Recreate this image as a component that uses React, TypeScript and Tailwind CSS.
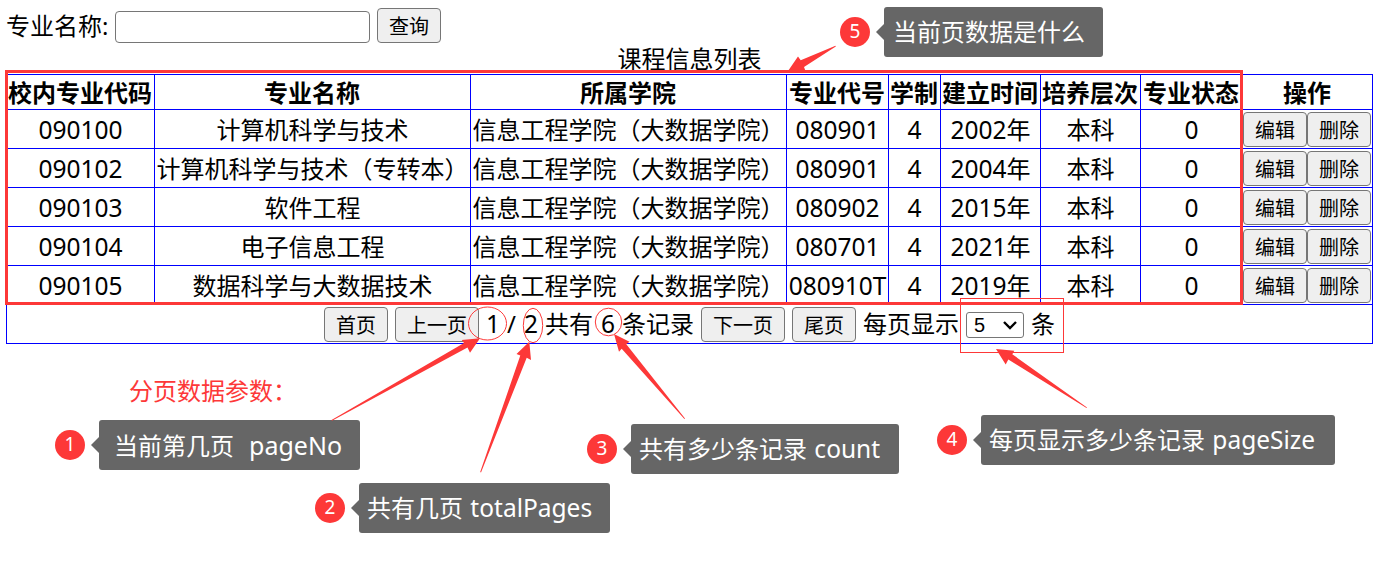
import type { ReactNode } from "react";

const majors = [
  ["090100", "计算机科学与技术", "080901", "2002"],
  ["090102", "计算机科学与技术（专转本）", "080901", "2004"],
  ["090103", "软件工程", "080902", "2015"],
  ["090104", "电子信息工程", "080701", "2021"],
  ["090105", "数据科学与大数据技术", "080910T", "2019"],
];

const headers = ["校内专业代码", "专业名称", "所属学院", "专业代号", "学制", "建立时间", "培养层次", "专业状态", "操作"];

const columns = ["w-[148px]", "w-[316px]", "w-[316px]", "w-[102px]", "w-[52px]", "w-[100px]", "w-[100px]", "w-[102px]", "w-[130px]"];

function Button({ children, wide = false }: { children: ReactNode; wide?: boolean }) {
  return (
    <button
      className={`h-[35px] shrink-0 rounded-[4px] border border-[#767676] bg-[#efefef] pt-[2px] text-center text-[20px] leading-[31px] ${wide ? "w-[84px]" : "w-[64px]"}`}
    >
      {children}
    </button>
  );
}

function Cell({ children }: { children: ReactNode }) {
  return (
    <td className="h-[39px] border-r border-b border-[#0000ff] p-0 pt-[2px] text-center leading-[32px] whitespace-nowrap">
      {children}
    </td>
  );
}

function Num({ children }: { children: ReactNode }) {
  return <span className="text-[24.5px]">{children}</span>;
}

function Callout({ n, place, box, children }: { n: number; place: string; box: string; children: ReactNode }) {
  return (
    <div className={`absolute flex h-[50px] items-center ${place}`}>
      <span className="h-[30px] w-[30px] rounded-full bg-[#fd3838] text-center text-[19px] leading-[29px] text-white">{n}</span>
      <svg className="ml-[6px] h-4 w-2" viewBox="0 0 8 16">
        <path d="M8 0 0 8l8 8z" fill="#666" />
      </svg>
      <span className={`h-[50px] rounded-[3px] bg-[#666] leading-[50px] whitespace-pre text-white ${box}`}>{children}</span>
    </div>
  );
}

export default function App() {
  return (
    <div className="relative h-[576px] w-[1391px] overflow-hidden bg-white font-['Noto_Sans','Noto_Sans_CJK_SC',sans-serif] text-[24px] text-black">
      <div className="flex h-[43px] items-end pl-[6px]">
        <label htmlFor="major" className="w-[109px] leading-[35px] whitespace-nowrap">专业名称:</label>
        <input id="major" className="mr-[7px] h-8 w-[255px] rounded-[4px] border border-[#767676] bg-white" />
        <Button>查询</Button>
      </div>

      <table className="mt-[-1px] ml-[6px] w-[1367px] table-fixed border-separate border-spacing-0 border-t border-l border-[#0000ff]">
        <caption className="h-8 text-center leading-[34px]">课程信息列表</caption>
        <colgroup>
          {columns.map((w, i) => (
            <col key={i} className={w} />
          ))}
        </colgroup>
        <thead>
          <tr>
            {headers.map((h) => (
              <th key={h} className="h-[35px] border-r border-b border-[#0000ff] p-0 pt-[2px] pr-px text-center leading-[32px] font-bold whitespace-nowrap">
                {h}
              </th>
            ))}
          </tr>
        </thead>
        <tbody>
          {majors.map(([code, name, number, year]) => (
            <tr key={code}>
              <Cell><Num>{code}</Num></Cell>
              <Cell>{name}</Cell>
              <Cell>信息工程学院（大数据学院）</Cell>
              <Cell><Num>{number}</Num></Cell>
              <Cell><Num>4</Num></Cell>
              <Cell><Num>{year}</Num>年</Cell>
              <Cell>本科</Cell>
              <Cell><Num>0</Num></Cell>
              <td className="h-[39px] border-r border-b border-[#0000ff] p-0">
                <div className="flex pt-[1px]">
                  <Button>编辑</Button>
                  <Button>删除</Button>
                </div>
              </td>
            </tr>
          ))}
          <tr>
            <td colSpan={9} className="h-[39px] border-r border-b border-[#0000ff] p-0">
              <div className="flex h-[36px] items-center pl-[317px] leading-[32px] whitespace-nowrap">
                <Button>首页</Button>
                <span className="w-[7px]" />
                <Button wide>上一页</Button>
                <span className="w-[28px] pl-[7px]"><Num>1</Num></span>
                <span className="w-[17px]">/</span>
                <span className="w-[21px]"><Num>2</Num></span>
                <span className="w-[56px]">共有</span>
                <span className="w-[21px]"><Num>6</Num></span>
                <span className="w-[79px]">条记录</span>
                <Button wide>下一页</Button>
                <span className="w-[7px]" />
                <Button>尾页</Button>
                <span className="w-[110px] pl-[7px]">每页显示</span>
                <span className="relative mt-[2px] mr-[7px] flex h-[26px] w-[58px]">
                  <select className="h-[26px] w-[58px] appearance-none rounded-[3px] border border-[#767676] bg-white p-0 pl-[7px] font-['Liberation_Sans',sans-serif] text-[20px] leading-[24px]">
                    <option>5</option>
                  </select>
                  <svg className="pointer-events-none absolute top-[8px] right-[7px] h-[10px] w-[14px]" viewBox="0 0 14 10" fill="none" stroke="#000" strokeWidth="2.4">
                    <path d="m1 2 6 6 6-6" />
                  </svg>
                </span>
                <span>条</span>
              </div>
            </td>
          </tr>
        </tbody>
      </table>

      <div className="absolute top-[70px] left-[5px] h-[235px] w-[1238px] border-3 border-[#fd3838]" />
      <div className="absolute top-[298px] left-[960px] h-[55px] w-[104px] border border-[#fd3838]" />
      <p className="absolute top-[374px] left-[129px] leading-[34px] text-[#fd3838]">分页数据参数：</p>

      <Callout n={1} place="left-[55px] top-[420px]" box="w-[261px] pl-[15px]">当前第几页<span className="ml-[2px] text-[25px]">{"  pageNo"}</span></Callout>
      <Callout n={2} place="left-[315px] top-[483px]" box="w-[251px] pl-[8px]">共有几页<span className="ml-px text-[24.5px]"> totalPages</span></Callout>
      <Callout n={3} place="left-[587px] top-[424px]" box="w-[268px] pl-[8px]">共有多少条记录<span className="ml-px text-[24.5px]"> count</span></Callout>
      <Callout n={4} place="left-[937px] top-[415px]" box="w-[354px] pl-[8px]">每页显示多少条记录<span className="ml-px text-[24.5px]"> pageSize</span></Callout>
      <Callout n={5} place="left-[840px] top-[7px]" box="w-[219px] pl-[9px]">当前页数据是什么</Callout>

      <svg className="pointer-events-none absolute inset-0 h-[576px] w-[1391px]" viewBox="0 0 1391 576">
        <g fill="none" stroke="#fd3838" strokeWidth="1">
          <ellipse cx="487.5" cy="323.5" rx="19" ry="16.5" />
          <ellipse cx="533" cy="325.5" rx="9.7" ry="17.2" />
          <ellipse cx="608.5" cy="322" rx="13.2" ry="13.8" />
        </g>
        <g fill="#fd3838">
          <path d="M480 338.3 461.7 340 464 343 331.5 420 332 420.8 467.5 347.5 470 352.7Z" />
          <path d="M529.3 341.7 516.5 354 520.3 355.5 480.2 472 481 472.4 526.7 357.8 531 360Z" />
          <path d="M614 334 629.5 341.7 626.3 344.3 685 418.4 684.4 419 621.7 348.7 619 351.7Z" />
          <path d="M996 349 1014.3 350.8 1012.3 354.3 1087 407.5 1086.5 408 1008.3 359.5 1005.7 364.5Z" />
          <path d="M788 71 798 56.5 800.7 60.3 835.5 45.8 835.8 46.4 804 67 805.5 71Z" />
        </g>
      </svg>
    </div>
  );
}
